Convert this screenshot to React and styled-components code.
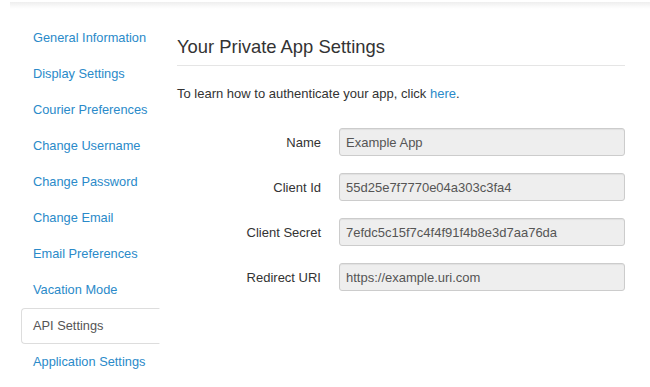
import React from 'react';
import styled, { createGlobalStyle } from 'styled-components';

const navItems = [
    'General Information',
    'Display Settings',
    'Courier Preferences',
    'Change Username',
    'Change Password',
    'Change Email',
    'Email Preferences',
    'Vacation Mode',
    'API Settings',
    'Application Settings',
];

const fields = [
    { label: 'Name', value: 'Example App' },
    { label: 'Client Id', value: '55d25e7f7770e04a303c3fa4' },
    { label: 'Client Secret', value: '7efdc5c15f7c4f4f91f4b8e3d7aa76da' },
    { label: 'Redirect URI', value: 'https://example.uri.com' },
];

function App() {
    return (
        <>
            <GlobalStyle />
            <TopShadow />
            <Page>
                <Sidebar>
                    {navItems.map(item => (
                        <NavItem key={item} active={item === 'API Settings'}>
                            {item}
                        </NavItem>
                    ))}
                </Sidebar>
                <Main>
                    <Title>Your Private App Settings</Title>
                    <Intro>
                        To learn how to authenticate your app, click <a href="#">here</a>.
                    </Intro>
                    <Form>
                        {fields.map(f => (
                            <Row key={f.label}>
                                <Label>{f.label}</Label>
                                <Input readOnly value={f.value} />
                            </Row>
                        ))}
                    </Form>
                </Main>
            </Page>
        </>
    );
}

export default App;

const GlobalStyle = createGlobalStyle`
    body {
        margin: 0;
        background: #fff;
        font-family: "Liberation Sans", Arial, sans-serif;
        font-size: 13px;
        color: #333;
    }
`

const TopShadow = styled.div`
    height: 7px;
    margin: 2px 0 0 10px;
    background: linear-gradient(#eeeeee, #fbfbfb 70%, #fff);
`

const Page = styled.div`
    display: flex;
    padding: 11px 0 0 21px;
`

const Sidebar = styled.div`
    width: 138px;
    border-right: 1px solid #ddd;
    display: flex;
    flex-direction: column;
`

const NavItem = styled.div`
    height: 34px;
    line-height: 34px;
    padding-left: 11px;
    margin-right: -1px;
    border: 1px solid ${p => (p.active ? '#ddd' : 'transparent')};
    border-right-color: ${p => (p.active ? '#fff' : 'transparent')};
    border-radius: 4px 0 0 4px;
    background: #fff;
    color: ${p => (p.active ? '#555' : '#2a8ac9')};
    font-size: 12.8px;
    white-space: nowrap;
`

const Main = styled.div`
    flex: 1;
    padding: 0 25px 0 17px;
`

const Title = styled.h3`
    margin: 17px 0 0;
    padding-bottom: 8px;
    font-size: 18.4px;
    font-weight: normal;
    line-height: 20px;
    border-bottom: 1px solid #e5e5e5;
    color: #333;
`

const Intro = styled.p`
    margin: 20px 0 0;
    line-height: 16px;
    a {
        color: #2a8ac9;
        text-decoration: none;
    }
`

const Form = styled.div`
    margin-top: 26px;
    display: flex;
    flex-direction: column;
    gap: 17px;
`

const Row = styled.div`
    display: flex;
    align-items: center;
`

const Label = styled.label`
    width: 162px;
    text-align: right;
    padding-right: 18px;
    box-sizing: border-box;
    color: #333;
`

const Input = styled.input`
    flex: 1;
    height: 28px;
    box-sizing: border-box;
    padding: 0 6px;
    border: 1px solid #ccc;
    border-radius: 3px;
    background: #eee;
    color: #555;
    font-family: "Liberation Sans", Arial, sans-serif;
    font-size: 13px;
    box-shadow: inset 0 1px 1px rgba(0, 0, 0, 0.06);
    outline: none;
`
